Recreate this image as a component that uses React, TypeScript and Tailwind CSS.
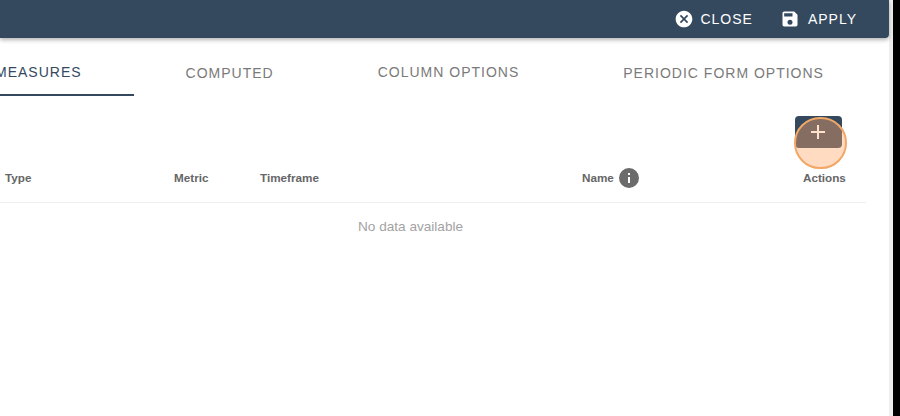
const closeCircle =
  'M12,2C17.53,2 22,6.47 22,12C22,17.53 17.53,22 12,22C6.47,22 2,17.53 2,12C2,6.47 6.47,2 12,2M15.59,7L12,10.59L8.41,7L7,8.41L10.59,12L7,15.59L8.41,17L12,13.41L15.59,17L17,15.59L13.41,12L17,8.41L15.59,7Z';
const contentSave =
  'M15,9H5V5H15M12,19A3,3 0 0,1 9,16A3,3 0 0,1 12,13A3,3 0 0,1 15,16A3,3 0 0,1 12,19M17,3H5C3.89,3 3,3.9 3,5V19A2,2 0 0,0 5,21H19A2,2 0 0,0 21,19V7L17,3Z';
const information =
  'M13,9H11V7H13M13,17H11V11H13M12,2A10,10 0 0,0 2,12A10,10 0 0,0 12,22A10,10 0 0,0 22,12A10,10 0 0,0 12,2Z';
const plus = 'M19,13H13V19H11V13H5V11H11V5H13V11H19V13Z';

function Icon({ d, className }: { d: string; className: string }) {
  return (
    <svg viewBox="0 0 24 24" className={className} fill="currentColor">
      <path d={d} />
    </svg>
  );
}

export default function App() {
  return (
    <div className="h-[416px] w-[900px] overflow-hidden bg-black font-['Liberation_Sans',Arial,sans-serif]">
      <div className="h-full w-[893px] border-r-[4px] border-[#eeeeee] bg-white">
        {/* Toolbar */}
        <header className="flex h-[38px] w-[889px] items-center justify-end gap-[27px] rounded-br-[4px] bg-[#34495e] pr-[32px] text-[14px] tracking-[1px] text-white shadow-[0_2px_4px_rgba(0,0,0,0.3)]">
          <button className="flex items-center gap-[6px]">
            <Icon d={closeCircle} className="h-[20px] w-[20px]" />
            CLOSE
          </button>
          <button className="flex items-center gap-[8px]">
            <Icon d={contentSave} className="h-[20px] w-[20px]" />
            APPLY
          </button>
        </header>

        {/* Tabs */}
        <nav className="mt-[10px] -ml-[57px] flex h-[48px] w-max text-[14px] tracking-[1px] text-[#7a7a7a]">
          <div className="flex items-center border-b-2 border-[#34495e] px-[52px] pt-[3px] text-[#34495e]">
            MEASURES
          </div>
          <div className="flex items-center px-[52px] pt-[2px]">COMPUTED</div>
          <div className="flex items-center px-[52px]">COLUMN OPTIONS</div>
          <div className="flex items-center px-[52px] pt-[2px]">PERIODIC FORM OPTIONS</div>
        </nav>

        {/* Add button */}
        <div className="relative mt-[20px] h-[32px] w-[866px]">
          <button className="ml-[795px] flex h-[32px] w-[47px] items-center justify-center rounded-[4px] bg-[#34495e]" />
          <div className="absolute top-[1px] left-[794px] h-[52px] w-[53px] rounded-full border-2 border-[#f2a766] bg-[#ffa566]/40" />
          <Icon d={plus} className="absolute top-[4px] left-[806px] h-[24px] w-[24px] text-[#fde3cd]" />
        </div>

        {/* Table */}
        <div className="w-[866px]">
          <div className="flex h-[55px] items-center border-b border-[#eeeeee] pt-[6px] text-[11.7px] font-bold text-[#666666]">
            <div className="w-[174px] pl-[5px]">Type</div>
            <div className="w-[86px]">Metric</div>
            <div className="w-[322px]">Timeframe</div>
            <div className="flex w-[221px] items-center gap-[3px]">
              Name
              <Icon d={information} className="h-[24px] w-[24px] text-[#6b6b6b]" />
            </div>
            <div>Actions</div>
          </div>
          <div className="flex h-[48px] items-center pl-[358px] text-[13.6px] text-[#a3a3a3]">
            No data available
          </div>
        </div>
      </div>
    </div>
  );
}
